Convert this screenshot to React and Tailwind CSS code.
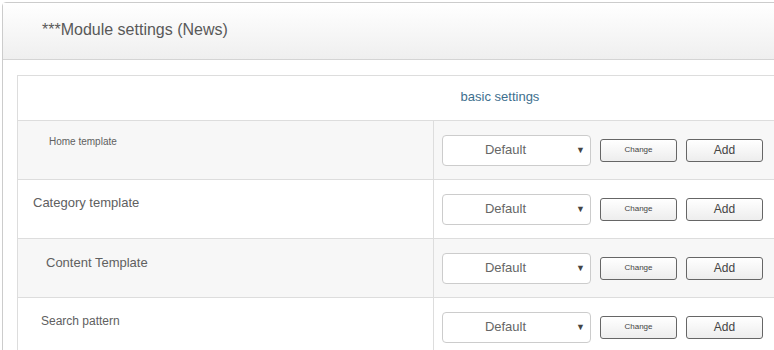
import React from "react";

const rows = [
  { label: "Home template", cls: "pl-[31px] pt-[13px] text-[10px]", bg: "bg-[#f7f7f7]" },
  { label: "Category template", cls: "pl-[15px] pt-[13px] text-[13px]", bg: "bg-white" },
  { label: "Content Template", cls: "pl-[28px] pt-[14px] text-[13px]", bg: "bg-[#f7f7f7]" },
  { label: "Search pattern", cls: "pl-[23px] pt-[14px] text-[12px]", bg: "bg-white" },
];

const SettingRow = ({ row }) => (
  <div className={`flex h-[59px] border-b border-[#dddddd] ${row.bg}`}>
    <div className={`w-[416px] shrink-0 border-r border-[#dddddd] text-[#606060] ${row.cls}`}>
      {row.label}
    </div>
    <div className="flex flex-1 items-center gap-[9px] pl-[8px]">
      <div className="relative flex h-[31px] w-[149px] items-center justify-center rounded-[4px] border border-[#cccccc] bg-white pr-[22px] text-[13px] text-[#666666]">
        Default
        <span className="absolute right-[5px] top-[8px] text-[9px] text-[#444444]">▼</span>
      </div>
      <button className="h-[23px] w-[77px] rounded-[3px] border border-[#666666] bg-gradient-to-b from-white to-[#ededed] text-[8px] text-[#444444]">
        Change
      </button>
      <button className="h-[23px] w-[77px] rounded-[3px] border border-[#666666] bg-gradient-to-b from-white to-[#ededed] text-[12px] text-[#444444]">
        Add
      </button>
    </div>
  </div>
);

export default function App() {
  return (
    <div
      className="h-[350px] w-[774px] overflow-hidden bg-white pl-[2px] pt-[2px]"
      style={{ fontFamily: '"Liberation Sans", Arial, sans-serif' }}
    >
      <div className="w-[900px] rounded-tl-[4px] border border-[#cccccc]">
        <div className="flex h-[57px] items-center border-b border-[#d4d4d4] bg-gradient-to-b from-white to-[#efefef] pl-[39px] pb-[2px] text-[16px] text-[#595959]">
          ***Module settings (News)
        </div>
        <div className="pl-[14px] pt-[15px]">
          <div className="w-[966px] border border-[#dddddd] border-b-0">
            <div className="flex h-[45px] items-center justify-center border-b border-[#dddddd] bg-white pb-[2px] text-[13px] text-[#3e6f8e]">
              basic settings
            </div>
            {rows.map((row) => (
              <SettingRow key={row.label} row={row} />
            ))}
          </div>
        </div>
      </div>
    </div>
  );
}
